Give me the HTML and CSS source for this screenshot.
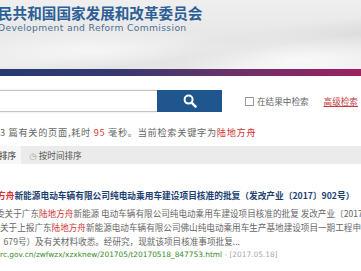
FILE: index.html
```html
<!DOCTYPE html>
<html lang="zh-CN">
<head>
  <meta charset="UTF-8" />
  <title>全文检索 - 国家发展和改革委员会</title>
  <meta name="viewport" content="width=device-width, initial-scale=1.0" />
  <link rel="stylesheet" href="styles.css">
</head>
<body>

  <!-- 站点头部 -->
  <div class="masthead">
    <div class="site-name">民共和国国家发展和改革委员会</div>
    <div class="site-name-en">Development and Reform Commission</div>
  </div>
  <div class="masthead-bar"></div>

  <!-- 检索框 -->
  <div class="search-row">
    <input class="search-input" type="text" value="" />
    <button class="search-btn" title="检索">
      <svg width="14" height="14" viewBox="0 0 14 14">
        <circle cx="5.6" cy="5.6" r="4" fill="none" stroke="#fff" stroke-width="2" />
        <line x1="8.6" y1="8.6" x2="12.6" y2="12.6" stroke="#fff" stroke-width="2.4" stroke-linecap="round" />
      </svg>
    </button>
    <label class="in-result"><span class="check"></span>在结果中检索</label>
    <a class="adv-link" href="#">高级检索</a>
  </div>

  <div class="summary">
    3 篇有关的页面,耗时 <span class="num">95</span> 毫秒。当前检索关键字为<span class="kw">陆地方舟</span>
  </div>

  <!-- 排序方式 -->
  <div class="sort-tabs">
    <span class="tab active">排序</span>
    <span class="tab"><span class="clock">&#9719;</span>按时间排序</span>
  </div>

  <!-- 检索结果 -->
  <div class="result">
    <a class="result-title" href="#"><span class="kw">方舟</span>新能源电动车辆有限公司纯电动乘用车建设项目核准的批复（发改产业〔2017〕902号）</a>
    <div class="result-desc">
      <div class="line l1">委关于广东<span class="kw">陆地方舟</span>新能源 电动车辆有限公司纯电动乘用车建设项目核准的批复 发改产业〔2017〕</div>
      <div class="line l2">关于上报广东<span class="kw">陆地方舟</span>新能源电动车辆有限公司佛山纯电动乘用车生产基地建设项目一期工程申请</div>
      <div class="line l3">〕679号）及有关材料收悉。经研究，现就该项目核准事项批复...</div>
    </div>
    <div class="result-url">rc.gov.cn/zwfwzx/xzxknew/201705/t20170518_847753.html <span class="date">- [2017.05.18]</span></div>
  </div>

</body>
</html>
```

FILE: styles.css
```css
body {
  margin: 0;
  width: 361px;
  overflow: hidden;
  background: #fff;
  font-family: "Noto Sans CJK SC", "Noto Sans", sans-serif;
  font-size: 8.6px;
  color: #555;
}

/* header */
.masthead {
  height: 69px;
  box-sizing: border-box;
  padding-top: 3px;
  background:
    radial-gradient(ellipse 120px 30px at 300px 60px, rgba(255,255,255,0.7), rgba(255,255,255,0)),
    radial-gradient(ellipse 160px 24px at 90px 50px, rgba(255,255,255,0.6), rgba(255,255,255,0)),
    linear-gradient(172deg, rgba(255,255,255,0) 55%, rgba(214,214,214,0.6) 70%, rgba(255,255,255,0) 85%),
    linear-gradient(180deg, #efefef 0%, #e6e6e6 60%, #ececec 100%);
  overflow: hidden;
  white-space: nowrap;
}

.site-name {
  font-size: 14.6px;
  line-height: 19px;
  font-weight: bold;
  color: #2d5f97;
  text-indent: -2px;
}

.site-name-en {
  font-family: "DejaVu Sans", sans-serif;
  font-size: 9.2px;
  line-height: 11px;
  letter-spacing: 0.35px;
  color: #4b6f94;
  text-indent: -2px;
}

.masthead-bar {
  height: 7px;
  background: linear-gradient(90deg, #263a72 0%, #33396f 30%, #6b326a 65%, #9c2160 100%);
}

/* search */
.search-row {
  display: flex;
  align-items: center;
  margin-top: 14px;
  height: 22px;
}

.search-input {
  width: 158px;
  height: 22px;
  box-sizing: border-box;
  margin: 0 0 0 -1px;
  border: 1px solid #c4c4c4;
  border-right: none;
  padding: 0;
  box-shadow: 0 0 2px rgba(0,0,0,0.12);
  outline: none;
}

.search-btn {
  width: 65px;
  height: 22px;
  border: none;
  margin: 0;
  padding: 0;
  background: #1e568d;
  display: flex;
  justify-content: center;
  align-items: center;
}

.in-result {
  display: flex;
  align-items: center;
  margin-left: 23px;
  color: #666;
}

.check {
  width: 7px;
  height: 7px;
  border: 1px solid #999;
  margin-right: 3px;
}

.adv-link {
  margin-left: 15px;
  color: #c0393f;
  text-decoration: underline;
}

.summary {
  margin-top: 13px;
  line-height: 14px;
  font-size: 9.2px;
  letter-spacing: 0.7px;
  color: #666;
  white-space: nowrap;
}

.num,
.kw {
  color: #d0302f;
}

/* sort tabs */
.sort-tabs {
  display: flex;
  margin-top: 7px;
  height: 18px;
  background: #ebebeb;
  line-height: 18px;
  color: #555;
}

.tab {
  padding: 0 8px;
}

.tab.active {
  background: #f7f7f7;
  color: #333;
  padding: 0 5px 0 0;
  text-indent: -1px;
}

.clock {
  color: #999;
  margin-right: 2px;
  font-family: "DejaVu Sans", sans-serif;
}

/* result item */
.result {
  margin-top: 25px;
  white-space: nowrap;
}

.result-title {
  display: block;
  line-height: 14px;
  font-weight: bold;
  font-size: 8.7px;
  color: #1b3f72;
  text-decoration: none;
  text-indent: -3px;
}

.result-desc {
  margin-top: 3px;
  line-height: 14px;
  color: #666;
}

.result-desc .l1 {
  text-indent: -4px;
}

.result-desc .l3 {
  text-indent: -5px;
}

.result-url {
  line-height: 13px;
  font-family: "DejaVu Sans", sans-serif;
  font-size: 7.4px;
  color: #3a8a2c;
}

.result-url .date {
  color: #aaa;
}
```
